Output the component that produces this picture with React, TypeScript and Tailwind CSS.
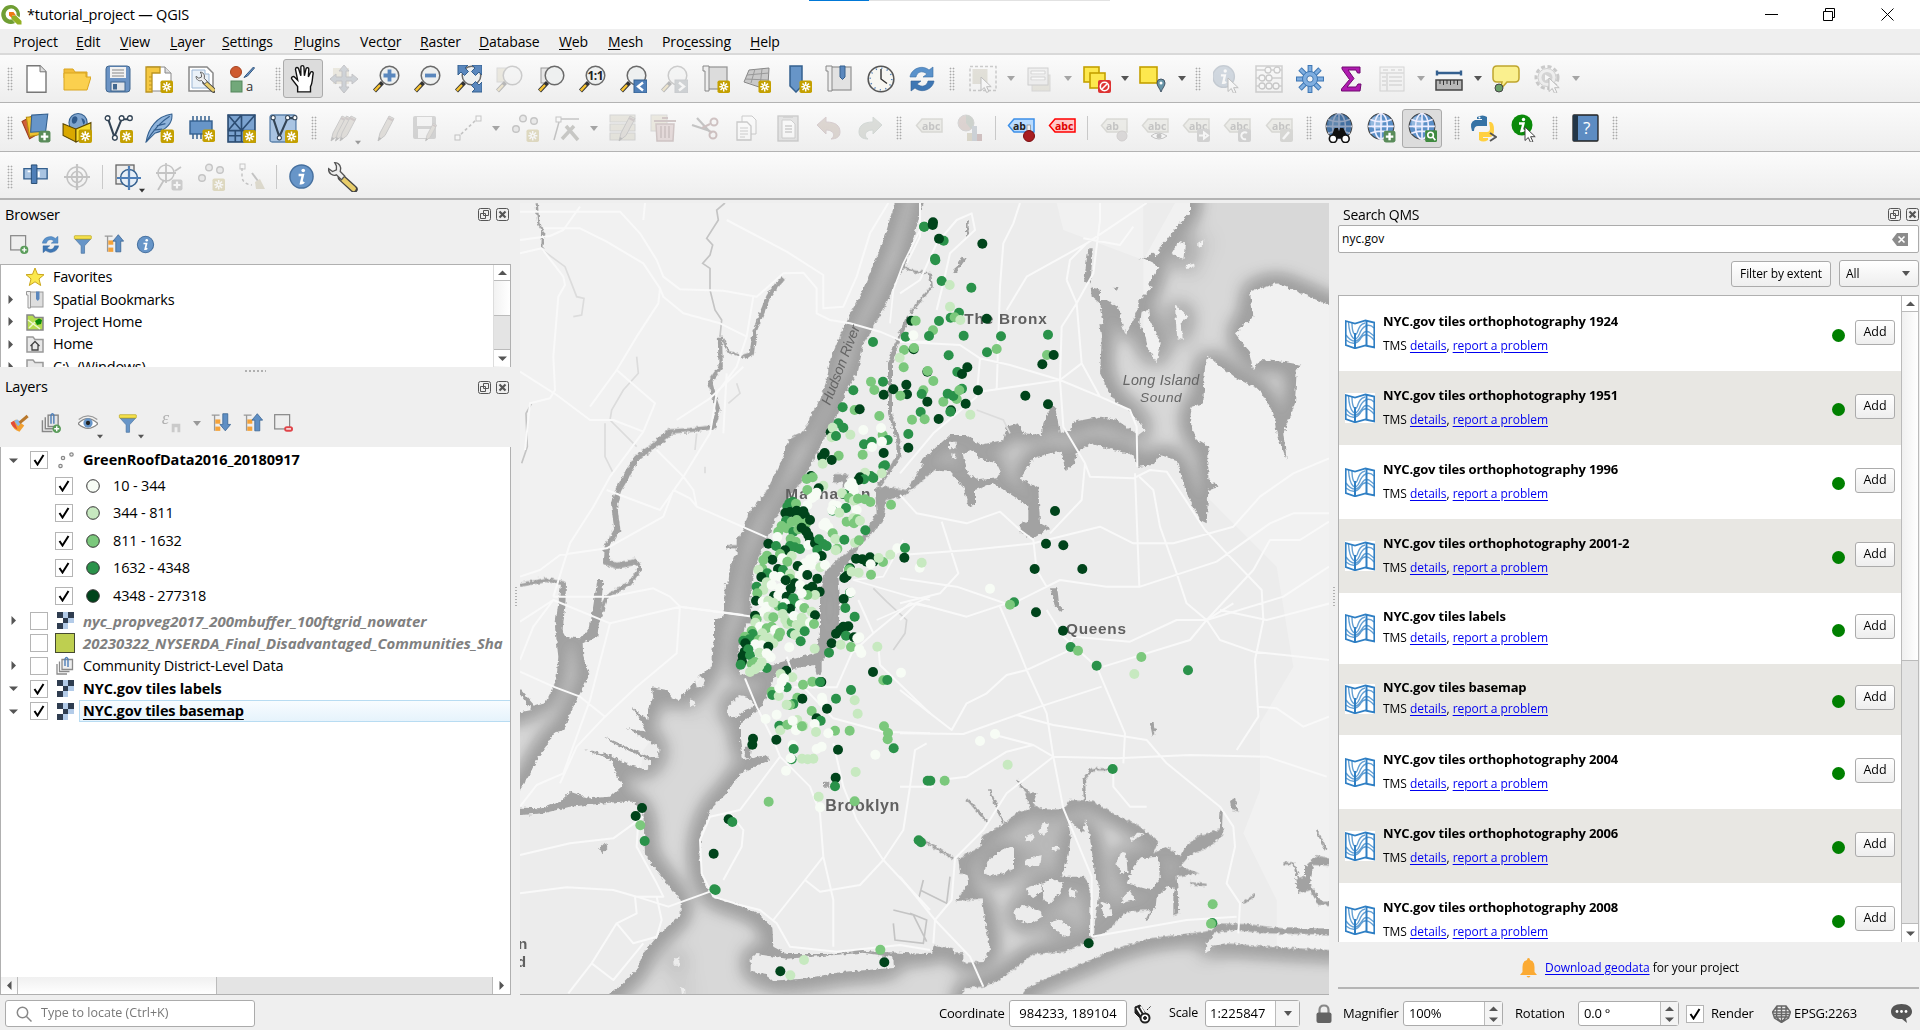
import React from 'react';

type Kids = { children?: React.ReactNode };

/* ---------- icon primitives ---------- */
function Ic({ children, s = 28, dim = false, vb = '0 0 28 28' }: Kids & { s?: number; dim?: boolean; vb?: string }) {
  return (
    <svg width={s} height={s} viewBox={vb} fill="none" className={dim ? 'shrink-0 opacity-30 saturate-50' : 'shrink-0'}>
      {children}
    </svg>
  );
}
const Star = () => (
  <g>
    <rect x="15.5" y="15.5" width="12.5" height="12.5" rx="1.8" fill="#c4a000" />
    <path d="M21.7 17v9.4M17.3 21.7h9M18.5 18.5l6.5 6.5M25 18.5l-6.5 6.5" stroke="#fff" strokeWidth="1.5" />
    <circle cx="21.7" cy="21.7" r="1" fill="#c4a000" />
  </g>
);
const Plus = ({ c = '#5a8c5a' }: { c?: string }) => (
  <g>
    <rect x="16.500" y="16.500" width="11" height="11" rx="2" fill={c} />
    <path d="M22 18.500v7M18.500 22h7" stroke="#fff" strokeWidth="2.200" />
  </g>
);
const Lens = ({ children }: Kids) => (
  <g>
    <path d="M10.500 17.500 2.500 26" stroke="#333" strokeWidth="4.200" />
    <path d="M8 20 2.800 25.600" stroke="#f7c331" strokeWidth="2.400" />
    <circle cx="17.500" cy="10.500" r="9.300" fill="#eef0f0" stroke="#6a6a6a" strokeWidth="1.500" />
    {children}
  </g>
);
const Tag = ({ t = 'abc', f = '#d6d6bd', s = '#9a9a80', c = '#555' }: { t?: string; f?: string; s?: string; c?: string }) => (
  <g>
    <path d="M1.500 11.500 7 5h20v13H7z" fill={f} stroke={s} strokeWidth="1.500" />
    <text x={t === 'abc' ? 7 : 6} y="15.500" fontSize="10.500" fontWeight="700" fontFamily="Open Sans, sans-serif" fill={c}>{t}</text>
  </g>
);
const Cursor = () => <path d="M15 13v13.500l3.300-3 2.300 5 2.300-1-2.300-4.800h4.600z" fill="#fff" stroke="#444" strokeWidth="1" />;
const Globe = () => (
  <g>
    <circle cx="14" cy="12.500" r="12" fill="#5b8fc7" stroke="#444" />
    <circle cx="10" cy="9" r="6" fill="#b9d3ec" opacity=".6" />
    <path d="M2 12.500h24M14 .5v24M4 6c6 2.500 14 2.500 20 0M4 19c6-2.500 14-2.500 20 0" stroke="#eef" strokeWidth="1.500" />
    <ellipse cx="14" cy="12.500" rx="6" ry="12" stroke="#eef" strokeWidth="1.500" />
  </g>
);
const Refresh = () => (
  <g>
    <path d="M2 12C3 4 14-1 21 5l4-3v10h-10l4-3C14 5 9 7 8 12z" fill="#5a92cb" stroke="#3a6ea5" strokeWidth=".6" />
    <path d="M26 16C25 24 14 29 7 23l-4 3V16h10l-4 3c5 4 10 2 11-3z" fill="#3e77b4" stroke="#2f5f96" strokeWidth=".6" />
  </g>
);
const Pencil = ({ x = 0 }: { x?: number }) => (
  <g transform={`translate(${x} 0)`}>
    <path d="M5 27 7 19 16 2l5 2.500-9 17z" fill="#b9a890" stroke="#666" />
    <path d="M5 27l1-4 2.500 1.500z" fill="#444" />
    <path d="M15 4l5 2.500" stroke="#8a6060" strokeWidth="2" />
  </g>
);
const Info = () => (
  <g>
    <circle cx="14" cy="14" r="12" fill="#6795c8" stroke="#46709f" strokeWidth="1.500" />
    <circle cx="15.800" cy="7.800" r="1.900" fill="#fff" />
    <path d="M11 12.500h4.500l-2 8.500q2 0 3-1.500" stroke="#fff" strokeWidth="2.500" />
  </g>
);
const Wrench = () => (
  <g>
    <path d="M13 15 24.500 25.500" stroke="#444" strokeWidth="6.500" strokeLinecap="round" />
    <path d="M13.500 15.500 24 25" stroke="#e8cd6a" strokeWidth="4.200" strokeLinecap="round" />
    <path d="M7 1.500c4 0 6.500 4 5 8l4 4-3 3.500-4.500-4.500C5 14 1 11 1.500 7L5 9.500 8.500 8V4.500z" fill="#eee" stroke="#555" strokeWidth="1.200" />
  </g>
);
const Tree = ({ up }: { up: boolean }) => (
  <g>
    <path d="M1 3h11M5 3v22" stroke="#999" strokeWidth="1.800" />
    <rect x="6" y="9" width="7" height="6" fill="#f5a33a" />
    <rect x="6" y="19" width="7" height="6" fill="#f5a33a" />
    {up ? <path d="M20 1l7.500 9h-4v15h-7V10h-4z" fill="#5f8fc4" stroke="#2f5a8c" /> : <path d="M20 25l7.500-9h-4V1h-7v15h-4z" fill="#5f8fc4" stroke="#2f5a8c" />}
  </g>
);
const Funnel = () => (
  <g>
    <path d="M3 6h23l-9 10v11h-5V16z" fill="#6795c8" stroke="#46709f" />
    <rect x="2" y="1" width="25" height="5" rx="1" fill="#f4e04d" stroke="#b8a41c" />
  </g>
);
const Qlogo = () => (
  <svg width="21" height="22" viewBox="0 0 21 22" className="shrink-0">
    <path d="M10 1a9.500 9.500 0 1 0 4 18l-3-3.500A5.500 5.500 0 1 1 15.500 11l3 2.500A9.500 9.500 0 0 0 10 1z" fill="#6f9e33" />
    <path d="M10.500 11.500H15L20.500 17v3.500H16.500L10.500 15z" fill="#93b023" />
    <path d="M8 8h4.500l2.500 3.500H11L11 14 8 11.500z" fill="#ee7913" />
  </svg>
);

const icons: Record<string, React.ReactNode> = {
  new: <Ic><path d="M5 .8h13l6 6v20.400H5z" fill="#fff" stroke="#777" strokeWidth="1.400" /><path d="M18 .8v6h6" fill="#ddd" stroke="#777" /></Ic>,
  open: <Ic><path d="M1 4h9l2 3h12v6H1z" fill="#f2bd3a" stroke="#d9a520" /><path d="M1 25V8h22v4h5l-4 13z" fill="#fbd04e" stroke="#d9a520" /></Ic>,
  save: <Ic><rect x="2" y="1" width="24" height="26" rx="3" fill="#6b93c4" stroke="#41678f" /><rect x="6" y="2" width="16" height="11" fill="#f2f2f2" /><path d="M8 5h12M8 8h12M8 11h12" stroke="#888" /><rect x="7" y="17" width="14" height="9" fill="#dfe3e8" stroke="#41678f" /><rect x="9" y="19" width="4" height="5.500" fill="#41678f" /></Ic>,
  layout: <Ic><path d="M2 2h18l6 6v18H2z" fill="#fff" stroke="#888" /><path d="M20 2v6h6" fill="#ddd" stroke="#888" /><path d="M1 2h14v6H7v19H1z" fill="#f5c842" stroke="#bb9420" strokeWidth="1.300" /><path d="M4 12h3M4 16h3M4 20h3M4 24h3" stroke="#bb9420" /><Star /></Ic>,
  layman: <Ic><path d="M2 2h18l6 6v18H2z" fill="#fff" stroke="#888" strokeWidth="1.500" /><path d="M5 5h13v4h4v14H5z" fill="#eaf1f8" stroke="#9bb6d4" /><g transform="translate(8 6) scale(.76)"><Wrench /></g></Ic>,
  style: <Ic><circle cx="8" cy="7" r="5.500" fill="#cf5a30" stroke="#a64320" /><path d="M25.500 2 18 10l-2 2.500 3.500-1.500 7-8z" fill="#6795c8" stroke="#33557d" /><rect x="3" y="16" width="11" height="11" fill="#72a87a" stroke="#55875c" /><text x="18" y="25.500" fontSize="13" fontFamily="Open Sans, sans-serif" fill="#333">a</text></Ic>,
  hand: <Ic s={30}><path d="M9 26V21L3.500 14c-1-2 1.500-3 3-1.500L9 15 7 5c0-2 2.300-2.300 2.900-.5L12 11V3c0-2 2.800-2 2.900 0l.4 8 1.500-6.500c.5-1.700 2.800-1.300 2.600.7L19 12l2-4c.7-1.500 2.800-.9 2.500.8C22.500 14 23 18 21 21v5z" fill="#fff" stroke="#111" strokeWidth="1.300" /></Ic>,
  pan: <Ic dim><rect x="3" y="3" width="16" height="16" fill="#d6c98e" /><path d="M14 0l5 6h-3v6h6V9l6 5-6 5v-3h-6v6h3l-5 6-5-6h3v-6H6v3l-6-5 6-5v3h6V6H9z" fill="#6d87a5" stroke="#556" /></Ic>,
  zin: <Ic><Lens><path d="M17.500 4.500v12M11.500 10.500h12" stroke="#5a87bd" strokeWidth="3.800" /></Lens></Ic>,
  zout: <Ic><Lens><path d="M12 10.500h11" stroke="#5a87bd" strokeWidth="3.800" /></Lens></Ic>,
  zfull: <Ic><Lens /><path d="M4 0h10l-3 3 3.500 3.500-4 4L7 7l-3 3zM28 0v10l-3-3-3.500 3.500-4-4L21 3l-3-3zM28 27H18l3-3-3.500-3.500 4-4L25 20l3-3z" fill="#5a87bd" stroke="#34608f" strokeWidth="1" /></Ic>,
  zsel: <Ic dim><rect x="2" y="3" width="14" height="14" fill="#d6c98e" stroke="#999" /><Lens /></Ic>,
  zlay: <Ic><rect x="4" y="3" width="14" height="15" fill="#e6e6e6" stroke="#999" /><Lens /></Ic>,
  znat: <Ic><Lens><text x="9.500" y="15" fontSize="12" fontWeight="700" fontFamily="Open Sans, sans-serif" fill="#222" textLength="16">1:1</text></Lens></Ic>,
  zlast: <Ic><Lens /><rect x="15" y="15" width="13" height="13" fill="#4f7fb8" stroke="#34608f" /><path d="M24 17.500 19 21.500l5 4" stroke="#fff" strokeWidth="2.400" /></Ic>,
  znext: <Ic dim><Lens /><rect x="15" y="15" width="13" height="13" fill="#789" stroke="#678" /><path d="M19 17.500l5 4-5 4" stroke="#fff" strokeWidth="2.400" /></Ic>,
  newmap: <Ic><rect x="5" y="2" width="20" height="22" fill="#dcdcdc" stroke="#999" strokeWidth="1.300" /><path d="M1 1h6v25H3V6H1z" fill="#eee" stroke="#888" /><Star /></Ic>,
  new3d: <Ic><path d="M6 5l20-2-1 17-9 2-15-5z" fill="#c9c9c9" stroke="#888" /><path d="M4 10l22-2M2 14l23 1M12 4l-4 14M19 4l-2 17" stroke="#999" /><Star /></Ic>,
  bm: <Ic><path d="M6 1h12v20l-6 6-6-6z" fill="#6795c8" stroke="#34608f" strokeWidth="1.500" /><Star /></Ic>,
  bms: <Ic><rect x="5" y="2" width="21" height="23" fill="#e2e2e2" stroke="#999" strokeWidth="1.300" /><path d="M1 1h6v25H3V6H1z" fill="#eee" stroke="#888" /><path d="M15 1h5v11l-2.500 2.500L15 12z" fill="#5a87bd" stroke="#34608f" /></Ic>,
  clock: <Ic><circle cx="14" cy="14" r="12.800" fill="#f7f7f2" stroke="#555" strokeWidth="1.600" /><circle cx="14" cy="14" r="10.800" stroke="#5a87bd" strokeWidth="1.600" strokeDasharray="1.200 4.450" /><path d="M14 4v10l6 4.500" stroke="#333" strokeWidth="1.400" /></Ic>,
  refresh: <Ic><Refresh /></Ic>,
  sel: <Ic dim><rect x="1" y="1.500" width="26" height="24" stroke="#666" strokeWidth="1.500" strokeDasharray="3 2" /><rect x="3.500" y="4" width="15" height="15" fill="#b9ad7e" /><g transform="translate(-3 -1)"><Cursor /></g></Ic>,
  form: <Ic dim><rect x="6" y="10" width="18" height="16" fill="#c9bf90" stroke="#999" /><rect x="2" y="3" width="20" height="17" fill="#ddd" stroke="#777" /><path d="M5 8h14M5 14h14" stroke="#fff" strokeWidth="4" /><path d="M5 6h14v3H5zM5 12h14v3H5z" stroke="#888" /></Ic>,
  desel: <Ic><rect x="1" y="2" width="15" height="15" fill="#fde84e" stroke="#c4a000" strokeWidth="1.600" /><rect x="7" y="8" width="15" height="15" fill="#fde84e" stroke="#c4a000" strokeWidth="1.600" /><rect x="15" y="15" width="13" height="13" rx="2" fill="#d33" /><circle cx="21.500" cy="21.500" r="4.200" stroke="#fff" strokeWidth="1.600" /><path d="M18.500 24.500l6-6" stroke="#fff" strokeWidth="1.600" /></Ic>,
  selloc: <Ic><rect x="1" y="2" width="17" height="16" fill="#fde84e" stroke="#c4a000" strokeWidth="1.600" /><path d="M22 27c-1.500-4-4-6-4-9a4 4 0 0 1 8 0c0 3-2.500 5-4 9z" fill="#6795a8" stroke="#456" /><circle cx="22" cy="18" r="1.500" fill="#fff" /></Ic>,
  ident: <Ic dim><g transform="translate(-2 -1) scale(.9)"><Info /></g><Cursor /></Ic>,
  abacus: <Ic dim><path d="M1 1h26v26H1zM1 5h26M1 13h26M1 21h26" stroke="#777" strokeWidth="1.500" /><g fill="#fff" stroke="#666" strokeWidth="1.300"><circle cx="13" cy="5" r="3" /><circle cx="22" cy="5" r="3" /><circle cx="7" cy="13" r="3" /><circle cx="14" cy="13" r="3" /><circle cx="7" cy="21" r="3" /><circle cx="14" cy="21" r="3" /><circle cx="21" cy="21" r="3" /></g></Ic>,
  gear: <Ic><g stroke="#3e77b4" strokeWidth="4.800"><path d="M14 0v28M0 14h28M4 4l20 20M24 4 4 24" /></g><g stroke="#7faee0" strokeWidth="2.800"><path d="M14 1v26M1 14h26M4.500 4.500l19 19M23.500 4.500l-19 19" /></g><circle cx="14" cy="14" r="7.500" fill="#7faee0" stroke="#3e77b4" /><circle cx="14" cy="14" r="3.200" fill="#f3f3f3" stroke="#3e77b4" /></Ic>,
  sigma: <Ic><path d="M5 2h18v6h-2.500L19 5h-8l6 8.500L10 22h9l2-3h3l-1 7H4.500v-2l8-9.500L5 4z" fill="#b01bb0" stroke="#700a70" /></Ic>,
  table: <Ic dim><rect x="2" y="2" width="24" height="24" fill="#eee" stroke="#888" /><path d="M2 8h24M9 8v18M4 12h4M11 12h13M4 16h4M11 16h13M4 20h4M11 20h13M5 5h5M13 5h4M20 5h4" stroke="#999" strokeWidth="1.500" /></Ic>,
  ruler: <Ic><path d="M2 8h24M2 5.500v5M26 5.500v5" stroke="#34608f" strokeWidth="2.400" /><rect x="1" y="15" width="26" height="10" fill="#b8b8b8" stroke="#444" strokeWidth="1.500" /><path d="M5 15v4M8.500 15v5M12 15v4M15.500 15v5M19 15v4M22.500 15v5" stroke="#333" /></Ic>,
  tip: <Ic><path d="M5 1h18q4 0 4 4v8q0 4-4 4h-8l-7 8 2-8H5q-4 0-4-4V5q0-4 4-4z" fill="#faf08e" stroke="#bfa52e" strokeWidth="1.500" /><circle cx="7" cy="23" r="4" fill="#6aa06a" stroke="#444" /></Ic>,
  action: <Ic dim><circle cx="13" cy="12.500" r="11" stroke="#666" strokeWidth="3" strokeDasharray="4 2.500" /><circle cx="13" cy="12.500" r="9" fill="#ddd" stroke="#777" /><circle cx="13" cy="12.500" r="5.500" fill="#888" /><path d="M11 9.500v6l5-3z" fill="#fff" /><Cursor /></Ic>,
  dsm: <Ic s={30}><path d="M1 8l9-5 7 16-9 5z" fill="#d2603a" stroke="#9c3f1e" /><path d="M5 4l11-1 2 17-10 2z" fill="#f2c230" stroke="#b58e10" /><path d="M10 2l15-1-2 16-14 1z" fill="#6795c8" stroke="#34608f" /><Plus /></Ic>,
  geopkg: <Ic s={30}><circle cx="15" cy="9" r="8.500" fill="#7fa5cf" stroke="#34608f" /><path d="M10 4c4-3 6 2 3 5s-5-1-3-5zM18 5c3 0 5 4 2 6z" fill="#2f5a8c" /><path d="M1 10l12 5v12L1 21z" fill="#d9a800" stroke="#5a4600" /><path d="M13 15l14-6v12l-14 6z" fill="#f7dc2e" stroke="#5a4600" /><Star /></Ic>,
  shp: <Ic s={29}><path d="M4 5l6 17 7-17h7" stroke="#345" strokeWidth="2" /><g fill="#fff" stroke="#345" strokeWidth="1.300"><circle cx="3.500" cy="4" r="2.300" /><circle cx="17" cy="4" r="2.300" /><circle cx="25" cy="4" r="2.300" /><circle cx="10.500" cy="23" r="2.300" /></g><Star /></Ic>,
  feather: <Ic s={30}><path d="M2 27C4 14 12 3 26 1c1 8-5 15-16 18z" fill="#8fb4dc" stroke="#34608f" /><path d="M2 27C8 17 14 9 24 3M9 16l8-1M12 12l8-2" stroke="#34608f" strokeWidth="1.200" /><Star /></Ic>,
  chip: <Ic><rect x="3" y="7" width="22" height="13" fill="#6795c8" stroke="#34608f" strokeWidth="1.400" /><path d="M6 2v5M10 2v5M14 2v5M18 2v5M22 2v5M6 20v5M10 20v5M14 20v5" stroke="#34608f" strokeWidth="1.500" /><Star /></Ic>,
  mesh: <Ic s={29}><rect x="1" y="1" width="26" height="26" fill="#7ba3d0" stroke="#2c4d73" strokeWidth="1.600" /><path d="M1 16h26M14 1v26M1 1l13 15M14 1 1 16M14 16 27 1M1 21h13M8 16v11" stroke="#2c4d73" strokeWidth="1.600" /><Star /></Ic>,
  virt: <Ic s={29}><rect x="1" y="1" width="25" height="26" rx="2" fill="#a9c4e2" stroke="#5b81ab" strokeWidth="1.300" /><path d="M4 4l6 18 8-18h7" stroke="#345" strokeWidth="2" /><g fill="#fff" stroke="#345"><circle cx="4" cy="3.500" r="2" /><circle cx="18" cy="3.500" r="2" /><circle cx="25" cy="3.500" r="2" /><circle cx="10" cy="23" r="2" /></g><Star /></Ic>,
  pencils: <Ic dim><g transform="translate(-3 0)"><Pencil x={-1} /><Pencil x={3.5} /><Pencil x={8} /></g></Ic>,
  pencil: <Ic dim><Pencil x={2} /></Ic>,
  savep: <Ic dim><rect x="1" y="2" width="23" height="23" rx="2" fill="#888" /><rect x="5" y="3" width="15" height="9" fill="#eee" /><rect x="6" y="15" width="12" height="9" fill="#eee" /><g transform="translate(10 8) scale(.7)"><Pencil /></g></Ic>,
  line: <Ic dim><path d="M3 24 24 4" stroke="#555" strokeWidth="1.600" strokeDasharray="3 2.500" /><rect x="1" y="21" width="5" height="5" fill="#fff" stroke="#555" /><rect x="22" y="2" width="5" height="5" fill="#fff" stroke="#555" /></Ic>,
  pts: <Ic dim><g fill="#ccc" stroke="#555" strokeWidth="1.400"><circle cx="5" cy="15" r="3.300" /><circle cx="12" cy="4.500" r="3.300" /><circle cx="23" cy="7" r="3.300" /></g><Star /></Ic>,
  vertex: <Ic dim><path d="M7 8 2 26M9 5h18" stroke="#555" strokeWidth="1.500" /><rect x="4" y="3" width="5" height="5" fill="#fff" stroke="#555" /><path d="M10 25 22 12M14 12l12 14" stroke="#665" strokeWidth="3.500" /></Ic>,
  tpen: <Ic dim><rect x="1" y="1" width="25" height="7" fill="#c9bf90" stroke="#888" /><rect x="1" y="10" width="25" height="7" fill="#c9bf90" stroke="#888" /><rect x="1" y="19" width="25" height="7" fill="#c9bf90" stroke="#888" /><Pencil x={5} /></Ic>,
  trash: <Ic dim><rect x="1" y="1" width="16" height="16" fill="#d6c98e" stroke="#999" /><path d="M6 10h18l-1 17H7z" fill="#d99" stroke="#955" strokeWidth="1.500" /><path d="M4 7h22M12 4h6M11 12v12M15 12v12M19 12v12" stroke="#955" strokeWidth="1.800" /></Ic>,
  cut: <Ic dim><path d="M1 11l18 6M6 4l13 14" stroke="#555" strokeWidth="2.200" /><circle cx="23" cy="8" r="3.500" stroke="#944" strokeWidth="2" /><circle cx="22" cy="21" r="3.500" stroke="#944" strokeWidth="2" /><path d="M19 10 11 14M19 17l2 2" stroke="#944" strokeWidth="2" /></Ic>,
  copy: <Ic dim><path d="M9 2h10l4 4v14H9z" fill="#fff" stroke="#666" /><path d="M4 8h10l4 4v14H4z" fill="#fff" stroke="#666" strokeWidth="1.300" /><path d="M7 14h8M7 17h8M7 20h8M7 23h5" stroke="#777" /></Ic>,
  paste: <Ic dim><rect x="4" y="2" width="20" height="25" fill="#bbb" stroke="#666" strokeWidth="1.300" /><path d="M8 6h9l4 4v14H8z" fill="#fff" stroke="#777" /><path d="M11 12h7M11 15h7M11 18h7M9 3h10" stroke="#777" strokeWidth="1.500" /></Ic>,
  undo: <Ic dim><path d="M2 11 11 3v5c10 0 14 4 14 10 0 5-4 7-9 7 4-2 4-9-5-9v4z" fill="#b58a6a" stroke="#a67" /></Ic>,
  redo: <Ic dim><path d="M26 11 17 3v5C7 8 3 12 3 18c0 5 4 7 9 7-4-2-4-9 5-9v4z" fill="#9aa890" stroke="#798" /></Ic>,
  abc: <Ic dim><Tag /></Ic>,
  pie: <Ic dim><circle cx="10" cy="9" r="8" fill="#b98070" stroke="#888" /><path d="M10 9V1a8 8 0 0 1 5 14z" fill="#686" /><rect x="11" y="19" width="5" height="8" fill="#a9994a" /><rect x="16" y="12" width="5" height="15" fill="#68a" /><rect x="21" y="20" width="5" height="7" fill="#a44" /></Ic>,
  abpin: <Ic><Tag t="ab" f="#b9dcff" s="#3c8fe8" c="#222" /><rect x="20" y="11" width="3.500" height="8" fill="#eee" stroke="#777" strokeWidth=".6" /><circle cx="22" cy="22" r="5.500" fill="#a81e22" stroke="#7a0f12" /></Ic>,
  abcred: <Ic><Tag f="#ffc9c9" s="#f00" c="#e00000" /></Ic>,
  abg: <Ic dim><Tag t="ab" /><circle cx="22" cy="22" r="5" fill="#a99" stroke="#877" /></Ic>,
  abeye: <Ic dim><Tag /><path d="M10 22q7-6 16 0-8 6-16 0z" fill="#fff" stroke="#555" /><circle cx="18" cy="22" r="2.500" fill="#555" /></Ic>,
  abmv: <Ic dim><Tag /><rect x="15" y="15" width="13" height="13" rx="2" fill="#888" /><path d="M17 21.500h5v-3l4 3-4 3v-3" stroke="#fff" strokeWidth="2" /></Ic>,
  abrot: <Ic dim><Tag /><rect x="15" y="15" width="13" height="13" rx="2" fill="#888" /><path d="M24 19a3.500 3.500 0 1 0-1 6" stroke="#fff" strokeWidth="2" /></Ic>,
  abed: <Ic dim><Tag /><rect x="15" y="15" width="13" height="13" rx="2" fill="#998" /><path d="M18 25l6-7" stroke="#fff" strokeWidth="2.500" /></Ic>,
  bino: <Ic s={30}><Globe /><circle cx="14" cy="12" r="11.500" fill="#234a70" opacity=".45" /><path d="M6 24 10 14h3l1 3 1-3h3l5 10z" fill="#111" /><circle cx="8.500" cy="24" r="3.500" fill="#fff" stroke="#111" strokeWidth="1.500" /><circle cx="20" cy="24" r="3.500" fill="#fff" stroke="#111" strokeWidth="1.500" /></Ic>,
  gplus: <Ic s={30}><Globe /><Plus /></Ic>,
  gq: <Ic s={30}><Globe /><rect x="17" y="16" width="11" height="11" rx="1" fill="#3f8a3f" /><circle cx="22" cy="20.500" r="2.600" stroke="#fff" strokeWidth="1.500" /><path d="M24 22.500l2.500 3" stroke="#fff" strokeWidth="1.500" /></Ic>,
  py: <Ic><path d="M8 3q6-3 10 0v9H9q-4 0-4 5H3q-3-9 3-11h7V5H8z" fill="#3673a5" /><path d="M20 8h2q3 1 3 8t-4 7h-7v1h5v2q-5 3-9 0v-8h8q3 0 3-4z" fill="#ffd040" /><circle cx="10.500" cy="3.500" r="1" fill="#fff" /><path d="M21 19l6 4-6 4" stroke="#555" strokeWidth="1.800" /></Ic>,
  ginfo: <Ic><circle cx="12" cy="11" r="10.500" fill="#0a8a0a" /><circle cx="13.500" cy="5.500" r="1.700" fill="#fff" /><path d="M9 9.500h4.500l-2 7.500q2 0 3-1" stroke="#fff" strokeWidth="2.400" /><Cursor /></Ic>,
  book: <Ic><rect x="2" y="1" width="25" height="26" rx="1" fill="#5d8cc2" stroke="#222" strokeWidth="1.300" /><rect x="2" y="1" width="5" height="26" fill="#223547" /><text x="12" y="20" fontSize="17" fontFamily="Open Sans, sans-serif" fill="#fff">?</text></Ic>,
  clip: <Ic s={26}><path d="M1 5h25v11H1z" fill="#a9c4e2" stroke="#34608f" strokeWidth="1.500" /><path d="M9 1h6v20H9z" fill="#4f7fb8" stroke="#234a70" /><path d="M5 8h3M17 8v6" stroke="#fff" strokeWidth="2" /></Ic>,
  target: <Ic dim><circle cx="14" cy="14" r="10" stroke="#555" strokeWidth="1.500" /><circle cx="14" cy="14" r="5.500" stroke="#555" strokeWidth="1.500" /><path d="M14 1v26M1 14h26" stroke="#555" strokeWidth="2.200" /></Ic>,
  advdig: <Ic><rect x="2" y="2" width="18" height="19" fill="#eee" stroke="#666" strokeWidth="1.300" /><circle cx="15" cy="15" r="8.500" fill="#e6eef7" stroke="#34608f" strokeWidth="1.500" /><path d="M15 3v24M3 15h24" stroke="#4f7fb8" strokeWidth="2.200" /></Ic>,
  tplus: <Ic dim><circle cx="11" cy="10" r="8" stroke="#555" strokeWidth="1.500" /><path d="M11 0v20M1 10h20M3 27l6-10M20 8l6-4" stroke="#555" strokeWidth="1.800" /><Plus c="#777" /></Ic>,
  broom: <Ic dim><path d="M4 5v8q0 8 10 9" stroke="#555" strokeWidth="1.500" strokeDasharray="3 2.500" /><rect x="2" y="1" width="5" height="5" stroke="#555" /><path d="M14 10l6 8" stroke="#555" strokeWidth="2" /><path d="M17 19l5-3 5 10-9 0z" fill="#b9a050" /></Ic>,
  info: <Ic s={27}><Info /></Ic>,
  wrench: <Ic s={31}><Wrench /></Ic>,
};

const Arrow = ({ c = 'border-t-[#555]' }: { c?: string }) => (
  <span className={`block h-0 w-0 border-x-[4.500px] border-t-[5px] border-x-transparent ${c}`} />
);

/* Toolbar tokens: name = icon slot, |x = grip of a given kind, / and . = separators, v/V = dim/dark drop arrow */
function Tool({ k }: { k: string }) {
  if (k.startsWith('|'))
    return (
      <div className={k === '|0' ? 'flex w-[15px] justify-center pl-1' : k === '|s' ? 'flex w-[20px] justify-end pr-[2px]' : k === '|e' ? 'flex w-[17px] justify-center' : 'flex w-[19.500px] justify-center'}>
        <span className="h-[24px] w-[6px] bg-[radial-gradient(circle,#aaa_0.8px,transparent_1.1px)] bg-[length:3px_3px]" />
      </div>
    );
  if (k === '/') return <div className="flex w-[10px] justify-center"><span className="h-[24px] w-px bg-[#c9c9c9]" /></div>;
  if (k === '.') return <div className="flex w-[8px] justify-center"><span className="h-[24px] w-px bg-[#c9c9c9]" /></div>;
  if (k === 'v' || k === 'V') return <div className="flex w-[15.700px] justify-center"><Arrow c={k === 'v' ? 'border-t-[#a5a5a5]' : 'border-t-[#555]'} /></div>;
  const on = k === 'hand' || k === 'gq';
  const sub = k === 'pencils' || k === 'advdig';
  return (
    <div className="relative flex w-[41.250px] shrink-0 items-center justify-center">
      <div className={on ? 'flex h-[39px] w-[40px] items-center justify-center rounded-[3px] border border-[#ababab] bg-[#dcdcdc]' : 'flex h-[39px] items-center justify-center'}>{icons[k]}</div>
      {sub && <span className="absolute bottom-[3px] right-[3px] scale-75"><Arrow c={k === 'pencils' ? 'border-t-[#999]' : 'border-t-[#333]'} /></span>}
    </div>
  );
}
const row1 = '|0 new open save layout layman style |s hand pan zin zout zfull zsel zlay znat zlast znext newmap new3d bm bms clock refresh |m sel v form v desel V selloc V |e ident abacus gear sigma table v ruler V tip action v'.split(' ');
const row2 = '|0 dsm geopkg shp feather chip mesh virt |m pencils pencil savep line v pts vertex v tpen trash cut copy paste undo redo |e abc pie / abpin abcred / abg abeye abmv abrot abed |m bino gplus gq |s py ginfo |m book |m'.split(' ');
const row3 = '|0 clip target / advdig tplus pts broom . info wrench'.split(' ');

function Bar({ items, h }: { items: string[]; h: string }) {
  return (
    <div className={`flex shrink-0 items-center border-[#b3b3b3] bg-linear-to-b from-[#fbfbfb] to-[#eeeeee] ${h}`}>
      {items.map((k, i) => <Tool key={i} k={k} />)}
    </div>
  );
}

const menus: [string, number, string][] = [
  ['Project', 3, 'w-[63px]'], ['Edit', 0, 'w-[44px]'], ['View', 0, 'w-[50px]'], ['Layer', 0, 'w-[52px]'], ['Settings', 0, 'w-[72px]'],
  ['Plugins', 0, 'w-[66px]'], ['Vector', 4, 'w-[60px]'], ['Raster', 0, 'w-[59px]'], ['Database', 0, 'w-[80px]'], ['Web', 0, 'w-[49px]'],
  ['Mesh', 0, 'w-[54px]'], ['Processing', 3, 'w-[88px]'], ['Help', 0, 'w-[40px]'],
];

/* ---------- dock widgets ---------- */
const DockButtons = () => (
  <div className="flex gap-[5px]">
    <svg width="13" height="13" viewBox="0 0 13 13" fill="none" stroke="#555"><rect x=".5" y=".5" width="12" height="12" rx="2" /><path d="M5.500 2.500h5v5h-5zM2.500 5.500h5v5h-5z" /></svg>
    <svg width="13" height="13" viewBox="0 0 13 13" fill="none" stroke="#555"><rect x=".5" y=".5" width="12" height="12" rx="2" /><path d="M3.500 3.500l6 6M9.500 3.500l-6 6" strokeWidth="2.200" /></svg>
  </div>
);
const Tri = ({ d, on = true }: { d: 'r' | 'd' | 'u' | 'l'; on?: boolean }) => (
  <svg width="9" height="9" viewBox="0 0 9 9" className={on ? 'shrink-0' : 'invisible shrink-0'}>
    <path d={d === 'r' ? 'M2.500 0v9L7 4.500z' : d === 'd' ? 'M0 2.500h9L4.500 7z' : d === 'u' ? 'M0 7h9L4.500 2.500z' : 'M6.500 0v9L2 4.500z'} fill="#555" />
  </svg>
);
const Check = ({ on = true }: { on?: boolean }) => (
  <span className="flex h-[18px] w-[18px] shrink-0 items-center justify-center border border-[#b5b5b5] bg-white">
    {on && <svg width="12" height="12" viewBox="0 0 12 12" fill="none"><path d="M1.500 6 4.500 10.500 10.500 1" stroke="#000" strokeWidth="2" /></svg>}
  </span>
);
const RasterIcon = () => (
  <svg width="17" height="17" viewBox="0 0 3 3" shapeRendering="crispEdges" className="shrink-0"><path d="M0 0h3v3H0z" fill="#b3cbe8" /><path d="M0 0h1v1H0zM2 0h1v1H2zM1 1h1v1H1zM0 2h1v1H0z" fill="#2f3d50" /><path d="M0 1h1v1H0zM2 2h1v1H2z" fill="#fff" /></svg>
);
const GroupIcon = () => (
  <svg width="18" height="19" viewBox="0 0 18 19" fill="none" className="shrink-0" stroke="#8a8a8a"><path d="M1 8v10h10M3.500 5.500v10h10" strokeWidth="1.300" /><path d="M6 3.500h10.500v10H6z" fill="#eee" strokeWidth="1.300" /><path d="M9 10V3q1.500-3 3 0v8" stroke="#4f7fb8" strokeWidth="1.400" /></svg>
);
const FolderIcon = ({ kind }: { kind: string }) => (
  <svg width="18" height="18" viewBox="0 0 18 18" fill="none" className="shrink-0">
    {kind === 'star' ? <path d="M9 0l2.500 6.300 6.500.4-5 4.200 1.700 6.600L9 13.800l-5.700 3.700L5 10.900 0 6.700l6.500-.4z" fill="#fbe84e" stroke="#c9a51c" /> : null}
    {kind === 'bm' ? <g><rect x="3" y="1" width="14" height="15" fill="#dedede" stroke="#999" /><path d="M.5 .5h4V17H2V4H.5z" fill="#eee" stroke="#999" /><path d="M10 .5h3.500V8l-1.700 2L10 8z" fill="#5a87bd" /></g> : null}
    {kind === 'ph' ? <g><path d="M1 2h6l2 2.500h8V17H1z" fill="#b5dc50" stroke="#888" strokeWidth="1.500" /><path d="M2 7l12 9M3 15 9 9" stroke="#eef8d0" strokeWidth="1.500" /><path d="M9 8l4-2.500 3 1.500-1 4-4 1z" fill="#0a8a0a" /></g> : null}
    {kind === 'home' || kind === 'dir' ? <path d="M1 2h6l2 2.500h8V17H1z" fill="#e8e8e8" stroke="#999" strokeWidth="1.500" /> : null}
    {kind === 'home' ? <path d="M4.500 11 9 6.500l4.500 4.500M6 10v5h6v-5" stroke="#444" strokeWidth="1.300" /> : null}
  </svg>
);

const browserRows: [string, string][] = [['star', 'Favorites'], ['bm', 'Spatial Bookmarks'], ['ph', 'Project Home'], ['home', 'Home'], ['dir', 'C:\\  (Windows)']];
const classes: [string, string][] = [['#f7fcf5', '10 - 344'], ['#c7e9c0', '344 - 811'], ['#7bc87c', '811 - 1632'], ['#2a924a', '1632 - 4348'], ['#00441b', '4348 - 277318']];

function LeftDock() {
  return (
    <div className="flex w-[511px] shrink-0 flex-col">
      <div className="flex h-[29px] items-center justify-between pl-[5px] pr-[2px] text-[14.500px] tracking-[-0.2px]"><span>Browser</span><DockButtons /></div>
      <div className="flex h-[35px] items-center gap-[12.300px] pl-[10px] pb-[5px]">
        <Ic s={19}><rect x="1" y="1" width="22" height="21" fill="#eee" stroke="#888" strokeWidth="1.800" /><circle cx="21" cy="22" r="6" fill="#5a9c5a" /><path d="M21 18.500v7M17.500 22h7" stroke="#fff" strokeWidth="2" /></Ic>
        <Ic s={19}><Refresh /></Ic>
        <Ic s={19}><Funnel /></Ic>
        <Ic s={20}><Tree up /></Ic>
        <Ic s={19}><Info /></Ic>
      </div>
      <div className="flex h-[103px] overflow-hidden border-x border-t border-[#b0b0b0] bg-white">
        <div className="flex-1 pt-px">
          {browserRows.map(([k, t]) => (
            <div key={t} className="flex h-[22.400px] items-center pl-[5px] text-[14.500px] tracking-[-0.25px]">
              <Tri d="r" on={k !== 'star'} /><span className="w-[11px]" /><FolderIcon kind={k} /><span className="ml-[9px] whitespace-pre">{t}</span>
            </div>
          ))}
        </div>
        <div className="flex w-[17px] flex-col border-l border-[#ddd] bg-linear-to-r from-[#f2f2f2] to-white">
          <div className="flex h-[16px] items-center justify-center border-b border-[#bbb] bg-white"><Tri d="u" /></div>
          <div className="h-[34px]" />
          <div className="h-[35px] border-y border-[#bbb] bg-[#e4e4e4]" />
          <div className="flex h-[16px] items-center justify-center bg-white"><Tri d="d" /></div>
        </div>
      </div>
      <div className="flex h-[8px] items-center justify-center"><span className="h-[2px] w-[21px] bg-[repeating-linear-gradient(90deg,#b0b0b0_0_2px,transparent_2px_4px)]" /></div>
      <div className="flex h-[24px] items-center justify-between pl-[5px] pr-[2px] text-[14.500px] tracking-[-0.2px]"><span>Layers</span><DockButtons /></div>
      <div className="flex h-[48px] items-center pl-[10px]">
        <Ic s={19}><path d="M1 13l8-5 12 9-7 9q-9-2-13-13z" fill="#f2a030" /><path d="M1 13l5-3 5 13q-7-3-10-10z" fill="#e24a3a" /><path d="M6 10l5-2 6 5-5 5z" fill="#8ab8e8" /><path d="M14 13 26 3" stroke="#b9782c" strokeWidth="4.500" /></Ic>
        <span className="w-[12px]" /><Ic s={20}><path d="M2 10v16h14M6 6v16h14" stroke="#888" strokeWidth="2" /><rect x="10" y="3" width="14" height="16" fill="#e5e5e5" stroke="#888" strokeWidth="2" /><path d="M14 15V3q2-4 4 0v12" stroke="#4f7fb8" strokeWidth="2" /><circle cx="22" cy="22" r="6" fill="#5a9c5a" /><path d="M22 18.500v7M18.500 22h7" stroke="#fff" strokeWidth="2" /></Ic>
        <span className="w-[17px]" /><Ic s={20}><path d="M0 15Q13 1 28 15 14 28 0 15z" fill="#fff" stroke="#888" strokeWidth="1.800" /><circle cx="14" cy="14" r="6.500" fill="#6795c8" /><circle cx="14" cy="14" r="3" fill="#222" /><path d="M1 9Q14-1 27 9" stroke="#999" strokeWidth="1.800" /></Ic>
        <span className="mt-[26px] ml-[-2px] scale-75"><Arrow /></span>
        <span className="w-[14px]" /><Ic s={19}><Funnel /></Ic><span className="mt-[26px] scale-75"><Arrow /></span>
        <span className="w-[16px]" /><Ic s={20} dim><text x="1" y="16" fontSize="26" fontStyle="italic" fontFamily="Liberation Serif, serif" fill="#222">ε</text><path d="M15 15h12v12h-4v-7h-4v7h-4z" fill="#777" /></Ic>
        <span className="w-[12px]" /><Arrow c="border-t-[#999]" />
        <span className="w-[10px]" /><Ic s={20}><Tree up={false} /></Ic>
        <span className="w-[12px]" /><Ic s={20}><Tree up /></Ic>
        <span className="w-[11px]" /><Ic s={19}><rect x="1" y="1" width="22" height="21" fill="#eee" stroke="#888" strokeWidth="1.800" /><rect x="15" y="18" width="13" height="8" rx="4" fill="#e0454a" /><path d="M18 22h7" stroke="#fff" strokeWidth="2" /></Ic>
      </div>
      <div className="flex flex-1 flex-col overflow-hidden border-x border-b border-[#b0b0b0] bg-white text-[14.500px] tracking-[-0.15px]">
        <div className="flex-1 pt-px">
          <div className="flex h-[24px] items-center pl-[8px]"><Tri d="d" /><span className="w-[12px]" /><Check />
            <svg width="17" height="17" viewBox="0 0 17 17" className="ml-[9px] shrink-0" fill="#eee" stroke="#888" strokeWidth="1.200"><circle cx="3.500" cy="14" r="1.700" /><circle cx="6" cy="6" r="1.700" /><circle cx="14.500" cy="2.500" r="1.700" /></svg>
            <span className="ml-[9px] font-bold tracking-normal">GreenRoofData2016_20180917</span></div>
          {classes.map(([c, t]) => (
            <div key={t} className="flex h-[27.500px] items-center pl-[54px]"><Check /><svg width="14" height="14" viewBox="0 0 14 14" className="ml-[13px]"><circle cx="7" cy="7" r="6.300" fill={c} stroke="#333" /></svg><span className="ml-[13px]">{t}</span></div>
          ))}
          <div className="flex h-[22.600px] items-center pl-[8px] text-[15px] font-bold italic tracking-normal text-[#808080]"><Tri d="r" /><span className="w-[12px]" /><Check on={false} /><span className="w-[9px]" /><RasterIcon /><span className="ml-[9px]">nyc_propveg2017_200mbuffer_100ftgrid_nowater</span></div>
          <div className="flex h-[22.600px] items-center whitespace-nowrap pl-[8px] text-[15px] font-bold italic tracking-[-0.02px] text-[#808080]"><Tri d="r" on={false} /><span className="w-[12px]" /><Check on={false} /><span className="ml-[7px] h-[20px] w-[20px] shrink-0 border border-[#454a30] bg-[#becf50]" /><span className="ml-[8px]">20230322_NYSERDA_Final_Disadvantaged_Communities_Sha</span></div>
          <div className="flex h-[22.600px] items-center pl-[8px] tracking-[-0.17px]"><Tri d="r" /><span className="w-[12px]" /><Check on={false} /><span className="w-[8px]" /><GroupIcon /><span className="ml-[9px]">Community District-Level Data</span></div>
          <div className="flex h-[22.600px] items-center pl-[8px] font-bold tracking-[-0.1px]"><Tri d="d" /><span className="w-[12px]" /><Check /><span className="w-[9px]" /><RasterIcon /><span className="ml-[9px]">NYC.gov tiles labels</span></div>
          <div className="flex h-[22.600px] items-center pl-[8px] font-bold tracking-[-0.15px]"><Tri d="d" /><span className="w-[12px]" /><Check /><span className="w-[9px]" /><RasterIcon /><span className="ml-[5px] flex h-[22px] flex-1 items-center border border-r-0 border-[#b8dcf2] bg-linear-to-b from-[#f8fcff] to-[#e6f3fc] pl-[3px] underline underline-offset-[3px]">NYC.gov tiles basemap</span></div>
        </div>
        <div className="flex h-[17px] bg-linear-to-b from-[#f0f0f0] to-white">
          <div className="flex w-[17px] items-center justify-center border-r border-[#bbb]"><Tri d="l" /></div>
          <div className="w-[198px]" />
          <div className="flex-1 border-x border-[#bbb] bg-[#e4e4e4]" />
          <div className="flex w-[17px] items-center justify-center bg-white"><Tri d="r" /></div>
        </div>
      </div>
    </div>
  );
}

/* ---------- map ---------- */
const palette: Record<string, string> = { a: '#f7fcf5', b: '#c7e9c0', c: '#7bc87c', d: '#2a924a', e: '#00441b' };
const dotsNW = '1243,80d 1204,362e 1217,362c 1187,410d 1210,406a 1182,450c 1211,448e 1212,444c 1169,473b 1181,502c 1089,426d 1083,545c 1119,545d 1093,570c 1121,584e 1150,568e 1189,554e 1191,583e 1171,587c 1030,571d 998,622d 1034,630c 1049,628e 1108,648c 985,670d 1000,683d 962,697e 968,683b 965,712b 978,708d 1021,704b 1060,690a 1118,705c 1113,684a 1195,702d 1195,743e 1062,733d 1085,725d 1133,720d 1116,725a 1086,741a 1121,759e 1058,764c 944,759e 986,767c 936,770e 965,780e 938,791b 1125,796d 1120,799d';
const dotsNE = '72,80d 99,67e 98,75e 131,122d 117,116e 247,131e 105,176d 106,181d 125,243d 149,255b 214,263d 150,320b 177,338d 152,353d 164,352c 181,360b 117,363d 260,356e 99,391c 87,408d 191,407d 303,409d 444,404d 290,447c 261,457d 146,466d 441,465c 461,465e 427,493e 172,516d 202,502e 186,522e 82,515e 83,513c 100,543c 70,571c 65,582d 82,605e 130,605c 143,581d 170,597c 160,588d 186,566d 178,571c 234,571e 376,587e 197,611e 153,631e 151,635d 211,644b 62,636d 74,658c 36,659c 116,657e 444,613e 465,933e 438,1031e 490,1036e 404,1107e 547,1107e 270,1166a 342,1207d 330,1214c 408,1237e';
const dotsC = '333,18e 320,27c 338,22c 370,47b 356,55e 322,60c 350,68a 336,84a 345,77a 322,106a 268,100d 278,95d 262,110d 288,101c 256,129e 270,126e 285,128e 300,131e 315,137e 290,122e 310,124e 258,152d 275,156c 290,150c 300,160c 320,158c 330,150e 245,168c 260,175c 235,185c 280,185d 295,178c 305,173e 318,184e 325,196e 330,210e 232,201a 205,221e 228,228d 272,207c 287,215c 270,228d 284,232d 300,237d 255,241e 325,225a 345,220e 357,208d 370,222d 352,240d 380,228d 365,258e 240,252c 201,257c 217,269e 190,270c 247,265a 275,258b 262,275c 330,268a 345,262a 315,280a 335,285a 293,288e 310,299a 361,292b 375,285a 187,296c 175,300b 202,310d 184,321e 234,297e 249,300d 222,318a 240,320a 270,312b 300,317a 322,315e 352,326e 270,326c 257,331e 285,340e 272,356e 300,345a 170,350d 200,337b 190,360b 215,345a 240,355a 222,378e 235,376a 246,368a 260,380e 323,358e 337,350e 359,365e 345,375b 322,375c 305,370a 172,370c 168,392e 188,395a 205,392b 200,410a 280,385d 275,395d 288,400d 235,408c 220,398b 255,400a 270,416e 248,412d 300,405a 313,414c 335,425b 345,436e 190,425a 165,437e 170,448c 166,458b 205,440b 220,442c 180,470a 200,475c 215,470c 225,480a 240,488c 235,500c 187,490b 248,432b 256,450b 262,462b 275,455c 282,438a 305,443b 315,455b 290,465b 330,458a 342,462c 300,480b 275,490d 285,495b 314,484d 302,514d 155,483c 158,492d 135,500c 130,512d 148,508d 176,510c 190,510b 205,505b 220,520b 166,523a 185,526a 136,520e 205,530e 134,545e 145,538d 128,558e 150,556d 178,548b 200,550a 212,562a 268,532a 344,536b 126,575e 122,584d 155,582c 165,576c 200,594d 150,606b 165,598b 178,588b 185,577b 512,18d 545,10b 495,8b 480,22e 492,28d 520,24d 475,30e 455,38a 460,50a 447,48a 462,66a 432,72d 426,70b 447,84c 462,92b 474,86c 495,88c 511,96c 573,104c 400,105a 412,108a 398,122d 396,120a 438,114d 418,128b 470,120a 376,158a 370,165a 385,172a 440,155c 460,145b 472,148c 462,160c 480,152b 496,181d 398,190c 406,207b 433,209d 465,218b 477,211c 412,236c 407,241b 468,266e 487,268e 510,262e 520,275e 500,275e 512,283a 549,276c 536,264b 571,254b 592,235a 615,234d 613,263e 659,293a 665,278b 476,308b 513,314c 450,295e 448,297d 447,300c 440,318e 433,324e 455,305b 450,368d 452,367a 431,387e 436,414d 464,440d 445,469e 430,470e 420,480e 408,491e 438,497d 395,520e 422,524b 387,548d 462,502e 472,505a 478,502a 453,531c 478,538a 484,549a 532,530b 519,606e 550,631c 562,630d 603,608a';
const dotsSW = '829,212e 812,222b 847,232b 822,235a 785,275c 787,285d 806,288b 830,262d 815,245a 808,265a 879,254c 907,245c 934,246e 930,246d 862,293c 850,312d 840,315c 830,314b 877,296e 936,293a 938,305a 978,296d 1023,270d 1034,301b 905,333c 951,326e 1043,341b 800,344a 767,357a 808,377d 811,391b 832,374c 862,360b 848,362a 858,391a 880,378b 876,379c 920,355e 932,362d 914,372a 918,396b 975,392c 1019,392c 955,400a 729,416e 727,434e 799,419e 848,435a 851,447d 920,447a 935,440a 984,449e 845,478d 842,475a 876,476b 893,478b 910,476b 828,512a 1096,464a 1037,516b 1122,379c 1134,399c 1133,418c 1151,445d 977,533e 975,559d 926,590b 930,622a 1034,604c 776,605c 1253,542d 396,624e 377,648e 391,676c 404,723d 656,658e 667,666d 611,761e 613,868d 617,870d 1111,1049c 1123,1087e 811,1114e 882,1080b 841,1126b 1226,721d 1233,727d';
const dotsSE = '489,92e 512,141d 534,152c 590,197d 724,171c 703,222b 864,211d 285,402a 240,423a 323,494b 91,542d 134,542c 638,507d 566,1030e 938,913c 937,969d 933,971c';

const Dots = ({ d, x, y }: { d: string; x: number; y: number }) => (
  <g transform={`translate(${x} ${y})`}>
    {d.split(' ').map((p, i) => {
      const [cx, rest] = p.split(',');
      return <circle key={i} cx={cx} cy={parseInt(rest, 10)} r="15" fill={palette[rest.slice(-1)]} />;
    })}
  </g>
);

function MapView() {
  return (
    <svg viewBox="30 9 2427 2373" preserveAspectRatio="none" className="block h-full w-full bg-[#ececec]">
      <defs>
        <filter id="water" filterUnits="userSpaceOnUse" x="-150" y="-150" width="2850" height="2800" colorInterpolationFilters="sRGB">
          <feTurbulence type="fractalNoise" baseFrequency="0.09" numOctaves="2" seed="3" result="n" />
          <feDisplacementMap in="SourceGraphic" in2="n" scale="14" xChannelSelector="R" yChannelSelector="G" result="src" />
          <feGaussianBlur in="src" stdDeviation="34" result="b" />
          <feComponentTransfer in="b" result="m"><feFuncA type="table" tableValues="0 0 0 0 0 0 0.02 0.1 0.25 0.5 1" /></feComponentTransfer>
          <feFlood floodColor="#d8d8d8" result="light" />
          <feComposite in="light" in2="m" operator="in" result="l2" />
          <feFlood floodColor="#a2a2a2" result="dark" />
          <feComposite in="l2" in2="dark" operator="over" result="w" />
          <feComposite in="w" in2="src" operator="in" />
        </filter>
        <mask id="islands" maskUnits="userSpaceOnUse" x="-150" y="-150" width="2850" height="2800">
          <rect x="-150" y="-150" width="2850" height="2800" fill="#fff" />
          <g fill="#000">
            <g transform="translate(0 1200)">
              <path d="M650,340 655,318 690,285 715,292 735,318 705,330 680,350 660,352zM555,240 570,228 585,240 578,262 560,262zM538,298l15,4 4,14-16,4zM492,1072h16v25h-14zM512,1160l10,4 2,20h-8z" />
              <path d="M722,1075 740,1062 830,1076 1060,1058 1150,1072 1152,1104 1000,1115 880,1136 780,1142 772,1122 722,1116z" />
            </g>
            <g transform="translate(1170 0)">
              <path d="M700,185 730,175 760,190 775,205 745,250 755,265 715,300 715,320 695,370 678,405 665,370 660,335 640,300 660,250zM722,335 745,330 748,360 782,430 770,487 745,450 735,405 718,370zM825,318 835,320 865,350 845,365 848,420 832,415 828,370zM815,160 835,125 855,130 850,180zM895,130l18-12-2,18-16,4zM857,195l25-4 2,12h-26zM750,9 860,9 865,45 830,75 800,100 770,170 750,150 765,110z" />
              <path d="M188,762 215,750 250,780 290,790 302,815 290,835 240,840 205,825zM147,725h20v20h-20zM155,760l14,2-4,14-12-2z" />
            </g>
            <g transform="translate(1170 1200)">
              <path d="M252,820 262,785 290,760 330,738 342,745 342,805 310,820 270,828zM375,710l25-10 5,20-28,4zM418,690l15-25 14,8-10,30-18,2zM375,780l50-15-4,30-44,4zM455,740l18-6 4,14-18,6zM378,865l50-18-4,30-28,20zM428,850l30-15 30,15-8,30-30,30-20-10zM342,930l30-15 50,18 4,18-40,20-38-15zM448,970l25-12 40,25-4,25-20,2zM505,865l25,5-4,25-18-5z" />
              <path d="M503,655 550,700 555,657 568,700 585,820 600,870 585,960 582,1010 570,1005 572,870 555,830 485,830 505,770 512,710zM648,790l15-35 15,5 5,55-20,4zM605,905l25,10 5,35-20,4-8-20zM668,890l20-20 18,30-40,8zM680,850 700,800 720,775 775,770 780,840 750,870zM765,940 770,890 805,860 825,870 812,925 790,950zM690,715l30-20 14,8-40,20z" />
            </g>
          </g>
        </mask>
      </defs>

      {/* land outside the city */}
      <path d="M0,0H1200L960,700 720,1000 650,1200 600,1400 400,1650 380,1800 0,1830zM1640,9 1660,90 1900,180 2000,0H2500V2400H2300V2100L2200,1900 2250,1770 2250,1570 2350,1400 2300,1100 2100,900 1900,500 1900,0z" fill="#f1f1f1" />

      <g filter="url(#water)">
        <g mask="url(#islands)">
          <g fill="#000">
            <path d="M1180,-80 1130,90 1100,170 1050,290 1020,340 985,420 960,480 950,540 930,600 900,650 885,690 835,720 820,770 790,830 765,880 715,940 700,990 680,1020 680,1060 660,1100 655,1150 645,1270 730,1270 720,1200 725,1150 735,1100 755,1050 780,1000 800,950 830,900 870,850 900,800 930,740 950,700 985,640 1010,570 1045,510 1060,430 1085,390 1120,330 1155,250 1185,195 1200,150 1220,80 1260,-80z" />
            <path d="M1290,755 1240,790 1190,870 1130,860 1095,865 1100,940 1040,1035 980,1080 945,1115 930,1200 930,1300 985,1300 990,1200 985,1130 1050,1040 1120,960 1130,900 1180,890 1270,815z" />
            <path d="M970,822h42v40h-14v-14h-28zM648,1035h45v10h-45z" />
          </g>
          <g transform="translate(0 1200)" fill="#000">
            <path d="M645,-50 640,50 612,60 612,120 605,165 605,200 570,225 540,260 505,300 485,290 470,270 425,262 430,290 415,330 412,360 365,320 385,350 410,395 350,385 445,440 445,470 420,472 280,408 310,430 425,485 412,510 360,495 300,465 225,448 305,480 320,530 340,555 300,590 240,595 180,575 150,605 100,625 -90,620 -90,655 100,640 180,620 330,605 370,605 400,640 405,760 430,800 470,850 512,900 512,945 450,1000 400,1060 380,1110 340,1150 300,1182 250,1300 1360,1300 1360,1060 1250,1062 1040,1052 960,1062 830,1062 790,1040 787,980 750,945 690,915 610,890 580,850 568,770 575,700 600,630 650,580 690,520 780,480 770,465 700,480 690,420 690,370 740,335 715,235 690,225 685,150 700,100 715,40 728,-50z" />
            <path d="M930,0 930,100 912,160 800,190 760,215 690,225 720,290 742,335 765,300 800,215 915,195 920,225 935,220 935,185 952,165 980,80 990,0z" />
            <path d="M155,-60 135,80 145,170 140,230 130,262 105,310 75,318 50,290 20,255 20,270 65,330 -90,360 -90,600 30,570 55,530 80,480 110,440 130,400 160,390 180,340 205,290 238,225 220,170 218,130 262,110 275,0 280,-60 262,-60 240,80 215,115 170,112 158,90 165,0z" />
            <path d="M268,745l20-20 4,20-18,18zM705,440h18l-4,35h-15z M942,545h16v18h-16z" />
          </g>
          <g transform="translate(1170 0)" fill="#000">
            <path d="M870,-90 870,40 830,80 800,120 750,165 715,180 690,220 662,262 640,260 690,300 655,320 620,300 600,300 600,270 572,260 575,290 600,310 612,370 598,370 605,420 600,520 625,570 650,610 690,635 735,690 715,705 650,660 600,650 520,665 510,690 480,700 465,620 450,620 430,670 425,705 370,700 355,670 320,680 310,720 240,735 200,705 150,705 110,740 60,785 90,810 150,815 190,860 200,900 210,922 225,915 225,870 280,850 350,895 385,920 385,960 358,975 362,1000 400,1015 450,985 420,970 415,865 360,835 400,775 450,760 485,755 495,812 525,790 530,760 570,730 620,745 700,765 715,800 760,795 780,765 830,780 860,880 900,960 920,970 925,870 960,860 925,840 925,740 890,720 870,660 875,620 910,610 915,500 925,470 1000,530 1080,570 1120,640 1130,700 1160,780 1150,700 1185,610 1190,510 1205,495 1150,485 1080,480 1060,510 1045,450 1005,400 1060,350 1050,275 1130,250 1287,315 1450,380 1450,-90z" />
            <path d="M565,145 578,145 572,250 552,245zM160,215 185,170 200,175 165,220zM198,60h8v50h-8zM450,1165h22l5,45 12,18-5,8-20-20z" />
          </g>
          <g transform="translate(1170 1200)" fill="#000">
            <path d="M-120,1070 95,1062 105,1035 160,1045 170,1090 250,1085 270,1050 255,960 245,895 165,905 205,850 200,825 180,820 175,775 240,740 250,705 300,680 350,640 390,625 375,580 410,580 400,610 420,625 490,625 510,600 580,605 640,640 720,680 775,725 760,760 800,740 840,770 860,735 900,705 970,685 970,705 930,740 870,765 840,800 900,820 830,830 838,940 820,945 820,860 760,930 680,935 620,995 550,1030 500,1055 400,1062 300,1140 250,1160 180,1165 160,1200 -120,1300z" />
            <path d="M280,1300 380,1165 450,1130 550,1090 650,1045 750,1015 870,1000 950,990 920,1030 915,1062 940,1040 980,1030 1100,1040 1290,1050 1450,1050 1450,1400 280,1400z" />
            <path d="M950,970 1040,972 1150,985 1360,985 1360,1005 1100,1000 1000,990 930,1000zM1215,800 1250,765 1287,775 1360,770 1360,800 1240,795 1230,850 1265,905 1360,905 1360,915 1255,915 1230,870 1195,880 1185,835 1215,830zM990,600l15-5 10,40-22-8zM750,370h8l2,15h10l-12,25z" />
            <path d="M270,570 310,670M200,595 265,670M75,725 160,775M1150,790 1180,790 1200,850M1030,910 1065,885M350,540 385,580M965,630 962,690M1250,690 1280,750M740,960 770,900M870,850l50,5M555,610 552,540 575,508 630,508" stroke="#000" strokeWidth="7" fill="none" />
          </g>
          <g fill="none" stroke="#000" strokeLinejoin="round">
            <path strokeWidth="13" d="M630,410 632,500 600,545 612,590 625,630 610,682 540,690 470,695M735,390 775,290 785,275 820,235M700,470 725,462 735,390" />
            <path strokeWidth="18" d="M480,697 435,735 380,775 325,870 312,910 322,990 290,1040 288,1085 320,1097 380,1085" />
            <path strokeWidth="12" d="M380,1085 390,1105 360,1150 290,1190 262,1270M30,1155 110,1140 162,1150 160,1220 152,1280M1195,350 1160,430 1140,490 1140,640 1165,720 1165,770 1105,860" />
            <path strokeWidth="7" d="M80,9 85,70 100,90 97,145M640,420 655,455 700,470M1165,195 1215,215 1260,220 1265,260 1200,340" />
          </g>
        </g>
      </g>

      {/* faint creeks */}
      <g fill="none" stroke="#c4c4c4" strokeWidth="5">
        <path d="M645,9 620,30 625,60 590,115 608,135 600,165 578,190 600,205 600,270 615,330 635,360 630,410M65,610 48,640 52,740 35,790" />
        <path stroke="#dcdcdc" d="M97,150 165,200 200,290 222,295 215,345 190,350M380,470 385,520 340,570 305,630 300,660 380,740M285,670 285,770 310,820M560,700 555,750M585,800v20M655,610 690,580 680,550M1400,630 1480,660 1500,700" />
        <path d="M1150,2130 1210,2145 1250,2225M1150,2170 1155,2220 1240,2230 1250,2160 1200,2140M1240,2040 1225,2100M1230,2070 1310,2110 1320,2030" />
        <path stroke="#d4d4d4" d="M1090,1165 1130,1205 1190,1260 1185,1300 1150,1350" />
      </g>

      {/* roads */}
      <g fill="none" stroke="#f9f9f9" strokeWidth="6" strokeLinejoin="round">
        <path d="M30,35 330,35 390,100 440,180 460,230 510,268 640,272 740,290 820,220 880,218 920,265 920,340 960,360 1020,370 1110,395 1180,425 1260,425M100,85 210,85 290,125 400,190 450,265 460,290 520,340 630,370 710,410 730,290M30,160 95,145 160,230 165,255 145,290 130,470 135,570 120,595 60,610 45,750M450,265 445,310 380,410 320,510 240,620M30,515 140,585 240,660 310,660 400,695 435,610 320,510M400,695 300,830 250,920 180,1030 130,1190M710,410 680,500 620,580 600,700 520,830 450,930 290,870M490,870 540,895 560,920 770,1012M560,920 550,870 520,830 440,750M30,1130 90,1110 150,1065 290,1045 460,950 490,870M130,1190 300,1190 430,1165 480,1190 510,1220 730,1250M30,120 120,108 160,90 210,20M400,60 405,9M1135,9 1080,100 1040,230 1000,320 940,325 940,225 830,155 650,60M650,520 640,700M500,660 600,595 700,500" />
        <path d="M1245,60 1180,190 1150,270 1140,370M1180,1020 1120,1130 1030,1140 1200,1190 1260,1200M1100,1260 1260,1190" strokeWidth="5" />
        <g transform="translate(0 1200)">
          <path d="M30,215 130,260 210,290 285,350 380,260 500,160 510,20 300,70 130,0 30,65M130,0 70,80 30,180M300,70 240,300 160,520 80,555 30,620M510,20 700,45M285,350 200,440 150,550M30,765 180,730 310,715 400,650M385,660 380,740 440,850 460,890 380,890 310,870 170,862 30,880M380,890 475,920 600,875M440,890 455,960 440,1010 370,1030 320,970 380,940 375,890M320,970 245,1090 175,1180M245,1090 310,1140 400,1030" />
          <path d="M705,235 740,320 790,420 810,470 690,630 600,650 570,720 575,820 610,890 690,915 750,930 800,970 840,1040 980,1055 1170,1035 1260,1050M660,640 700,690 695,740 640,840M810,470 900,560 930,640 940,770 970,900 970,1040M940,770 885,840 790,960M885,840 930,875 1050,855 1120,780 1180,690 1200,560 1215,450 1250,430M970,430 1000,560 1040,660 1120,780 1260,930M830,170 850,230 970,355 1120,395 1260,400M850,262 980,262 1025,160 1090,100 1045,0M1090,100 1200,10 1260,20M1105,140 1110,195 1260,340" />
        </g>
        <g transform="translate(1170 0)">
          <path d="M0,280 60,240 110,130 170,60 215,40 225,90 150,160 130,250 110,330M360,9 340,70 310,130 300,260 290,570M0,425 180,435 240,475 330,495 480,540 600,590 690,630 710,680 712,800M240,475 230,590 100,700 0,820M240,575 480,540 485,380 530,310 580,220 600,60 600,9M480,540 490,680 555,790 570,830 700,835 750,810 800,815 850,890 915,990M320,330 380,230 560,130 740,9M550,115 660,135 700,80M500,240 530,310 545,490 480,540M500,240 510,180 560,130M545,490 600,590M555,790 545,900 450,1000M0,885 50,940 200,970 300,935 360,990 400,1020 410,1110 440,1160M125,965 175,1120 120,1180 0,1210M0,1065 210,1050 400,1030 600,980 700,1030 820,1030 1000,980 1080,890 1180,820 1287,775M705,820 718,1160M718,830 760,870 780,980 830,1120 860,1210 920,1260M0,1135 170,1160 330,1215 480,1140 620,1160 720,1160 950,1085 1110,970 1180,940 1287,940M915,990 980,1060 1085,1170 1090,1260M920,1260 1060,1110 1110,1020 1200,1020 1287,965M920,1260 1150,1190 1287,1100M60,9 60,110 20,190" />
        </g>
        <g transform="translate(1170 1200)">
          <path d="M0,400 190,402 420,320 605,260M0,270 155,390 200,310 260,280 320,225 380,210 360,160 300,20M380,210 440,340 460,470 490,625 575,830 575,1010M380,210 500,155 520,110 690,125 830,60 920,60 1000,10M610,200 870,120 920,60 960,120 1060,155 1287,180M440,30 490,110 590,200 675,400 670,490M350,345 460,375 740,420 800,490 960,620 1000,680 1005,740 980,850 1020,910 1015,1000M285,405 400,435 460,470 650,475 870,465 1100,470 1280,530M460,470 320,580 250,690 165,775 155,900 105,960 0,830M105,960 100,1030M105,960 210,1070 250,1160M640,490 640,560 690,620 740,620M0,560 100,560M1090,60 1065,180 1075,350 1010,450M1075,320 1130,325 1210,380 1287,350M120,540 200,530 320,455 400,435M575,1010 860,960 1010,950M1290,10 1100,60 960,30M0,60 50,10 200,50 320,10" />
        </g>
      </g>

      <g fontFamily="Liberation Sans, Arial, sans-serif" fill="#606060">
        <g fontSize="43" fontStyle="italic" fill="#666">
          <text transform="translate(960 618) rotate(-69)" textLength="252">Hudson River</text>
          <text x="1838" y="556" textLength="230">Long Island</text>
          <text x="1890" y="606" textLength="125" fontSize="41">Sound</text>
        </g>
        <g fontSize="46" fontWeight="700">
          <text x="1363" y="372" textLength="247">The Bronx</text>
          <text x="826" y="898" textLength="255">Manhattan</text>
          <text x="1668" y="1301" textLength="180">Queens</text>
          <text x="946" y="1834" textLength="222" fontSize="48">Brooklyn</text>
          <text x="24" y="2246">n</text>
          <text x="20" y="2302">d</text>
        </g>
      </g>

      <Dots d={dotsNW} x={0} y={0} />
      <Dots d={dotsNE} x={1170} y={0} />
      <Dots d={dotsSW} x={0} y={1200} />
      <Dots d={dotsSE} x={1170} y={1200} />
      <Dots d={dotsC} x={570} y={810} />
    </svg>
  );
}

/* ---------- search dock ---------- */
const results: [string, string][] = [
  ['NYC.gov tiles orthophotography 1924', 'h-[74px]'], ['NYC.gov tiles orthophotography 1951', 'h-[74px]'], ['NYC.gov tiles orthophotography 1996', 'h-[74px]'],
  ['NYC.gov tiles orthophotography 2001-2', 'h-[74px]'], ['NYC.gov tiles labels', 'h-[71px]'], ['NYC.gov tiles basemap', 'h-[71px]'],
  ['NYC.gov tiles orthophotography 2004', 'h-[74px]'], ['NYC.gov tiles orthophotography 2006', 'h-[74px]'], ['NYC.gov tiles orthophotography 2008', 'h-[74px]'],
];
const MapIcon = () => (
  <svg width="30" height="30" viewBox="0 0 30 30" fill="none" stroke="#2f7fc4" strokeWidth="1.400" className="shrink-0 bg-white">
    <path d="M.7 2 10 4.500 20.500 1.500 29.300 3.500V28.500L20.500 26.500 10 29.300 .7 26z" strokeWidth="1.800" /><path d="M10 14v15M21.500 1.500v25" strokeWidth="2" />
    <path d="M3.500 3c1 16 7 22 11 12C17 8 23 3 29 9M7 4c0 10 3 14 5 10 2-5 3-9 8-10M1 16c3 4 6 7 10 6 6-2 6-12 13-9l5 4M1 21c6 5 12 4 15-2 3-5 8-4 13 2" opacity=".75" />
  </svg>
);
function SearchDock() {
  return (
    <div className="flex w-[582px] shrink-0 flex-col pr-px text-[12px]">
      <div className="flex h-[25px] items-center justify-between pl-[5px] pt-[3px] text-[14px] tracking-[-0.3px]"><span>Search QMS</span><DockButtons /></div>
      <div className="flex h-[28px] items-center justify-between rounded-[2px] border border-[#ababab] bg-white pl-[3px] pr-[10px] tracking-[0.05px]">
        <span>nyc.gov</span>
        <svg width="16" height="13" viewBox="0 0 16 13"><path d="M0 6.500 5 0h11v13H5z" fill="#8c8c8c" /><path d="M6.500 3.500l6 6M12.500 3.500l-6 6" stroke="#fff" strokeWidth="1.600" /></svg>
      </div>
      <div className="flex h-[42px] items-center justify-end gap-[8px] pb-px">
        <span className="flex h-[26px] w-[100px] items-center justify-center rounded-[3px] border border-[#ababab] bg-linear-to-b from-white to-[#eee] tracking-[-0.1px]">Filter by extent</span>
        <span className="flex h-[27px] w-[80px] items-center justify-between rounded-[3px] border border-[#ababab] bg-linear-to-b from-white to-[#eee] pl-[6px] pr-[8px]">All<Arrow /></span>
      </div>
      <div className="flex h-[647px] overflow-hidden border-l border-t border-[#b0b0b0] bg-white">
        <div className="flex-1 overflow-hidden pt-[1px]">
          {results.map(([t, h], i) => {
            const short = h === 'h-[71px]';
            return (
              <div key={t} className={`flex items-start pl-[6px] pr-[6px] ${h} ${i % 2 ? 'bg-[#e8e7e3]' : 'bg-white'}`}>
                <div className={short ? 'pt-[20px]' : 'pt-[22px]'}><MapIcon /></div>
                <div className={short ? 'ml-[8px] flex flex-1 flex-col gap-[6px] pt-[15px] leading-[16px]' : 'ml-[8px] flex flex-1 flex-col gap-[9px] pt-[16px] leading-[16px]'}>
                  <span className="text-[13px] font-bold tracking-[-0.17px]">{t}</span>
                  <span className="tracking-[-0.04px]">TMS <span className="text-[#0000f0] underline underline-offset-2">details</span>, <span className="text-[#0000f0] underline underline-offset-2">report a problem</span></span>
                </div>
                <span className={short ? 'mt-[31px] h-[13px] w-[13px] rounded-full bg-[#008000]' : 'mt-[32px] h-[13px] w-[13px] rounded-full bg-[#008000]'} />
                <span className={`ml-[10px] flex h-[25px] w-[40px] items-center justify-center rounded-[3px] border border-[#ababab] bg-linear-to-b from-white to-[#eee] text-[12.500px] ${short ? 'mt-[21px]' : 'mt-[23px]'}`}>Add</span>
              </div>
            );
          })}
        </div>
        <div className="flex w-[18px] flex-col border-x border-[#bbb] bg-linear-to-r from-[#f0f0f0] to-white">
          <div className="flex h-[16px] items-center justify-center border-b border-[#bbb] bg-white"><Tri d="u" /></div>
          <div className="h-[348px]" />
          <div className="h-[264px] border-y border-[#bbb] bg-[#e4e4e4]" />
          <div className="flex h-[18px] items-center justify-center bg-white"><Tri d="d" /></div>
        </div>
      </div>
      <div className="flex h-[47px] items-center justify-center gap-[8px] border-b-2 border-[#b5b5b5] pr-[2px] pt-[7px] tracking-[-0.05px]">
        <svg width="17" height="20" viewBox="0 0 17 20" className="ml-1" fill="#fbaa33"><path d="M8.500 0q1.500 0 1.500 2 4.500 1 4.500 7v5l2.500 3H0l2.500-3V9q0-6 4.500-7 0-2 1.500-2zM6.500 18h4q-2 3-4 0z" /></svg>
        <span><span className="text-[#0000f0] underline underline-offset-2">Download geodata</span> for your project</span>
      </div>
    </div>
  );
}

const Spin = ({ v, w }: { v: string; w: string }) => (
  <span className={`flex h-[25px] items-center rounded-[3px] border border-[#ababab] bg-white pl-[5px] ${w}`}>
    <span className="flex-1">{v}</span>
    <span className="flex h-full w-[18px] flex-col items-center justify-center gap-[2px] border-l border-[#bbb] bg-[#f4f4f4]"><Tri d="u" /><Tri d="d" /></span>
  </span>
);

export default function App() {
  return (
    <div className="flex h-[1030px] w-[1920px] flex-col overflow-hidden bg-[#efefef] font-['Open_Sans','Noto_Sans',sans-serif] text-black">
      <div className="relative flex h-[29px] shrink-0 items-center bg-white pl-[1px] text-[14.500px] tracking-[-0.2px]">
        <div className="absolute left-[809px] top-0 flex h-px w-[301px] bg-[#e2e2e2]"><span className="w-[60px] bg-[#0078d7]" /></div>
        <Qlogo /><span className="ml-[5px]">*tutorial_project — QGIS</span>
        <div className="ml-auto flex items-center gap-[45px] pr-[26px]">
          <span className="h-px w-[13px] bg-black" />
          <svg width="13" height="13" viewBox="0 0 13 13" fill="none" stroke="#000"><path d="M.5 3.500h9v9h-9zM2.500 3.500v-3h9v9h-2" /></svg>
          <svg width="13" height="13" viewBox="0 0 13 13" stroke="#000"><path d="M.5.500l12 12M12.500.500l-12 12" /></svg>
        </div>
      </div>
      <div className="flex h-[26px] shrink-0 items-center border-b-2 border-[#d9d9d9] pl-[13px] text-[14px] tracking-[-0.13px]">
        {menus.map(([t, u, w]) => (
          <span key={t} className={w}>{t.slice(0, u)}<span className={t === 'Project' ? '' : 'underline underline-offset-2'}>{t[u]}</span>{t.slice(u + 1)}</span>
        ))}
      </div>
      <Bar items={row1} h="h-[48px] border-b" />
      <Bar items={row2} h="h-[49px] border-b pt-[2px]" />
      <Bar items={row3} h="h-[48px] border-b-2 pt-[3px]" />
      <div className="flex h-[795px] shrink-0">
        <LeftDock />
        <div className="flex w-[9px] shrink-0 items-center justify-center"><span className="h-[21px] w-[2px] bg-[repeating-linear-gradient(180deg,#b0b0b0_0_1px,transparent_1px_3px)]" /></div>
        <div className="w-[809px] shrink-0 border-b border-[#b0b0b0] pt-[3px]"><MapView /></div>
        <div className="flex w-[9px] shrink-0 items-center justify-center"><span className="h-[21px] w-[2px] bg-[repeating-linear-gradient(180deg,#b0b0b0_0_1px,transparent_1px_3px)]" /></div>
        <SearchDock />
      </div>
      <div className="flex h-[35px] shrink-0 items-center pl-[5px] pt-[2px] text-[13px] tracking-[-0.2px]">
        <span className="flex h-[27px] w-[250px] items-center gap-[9px] rounded-[3px] border border-[#ababab] bg-white pl-[10px] text-[12.500px] tracking-normal text-[#777]">
          <svg width="16" height="16" viewBox="0 0 16 16" fill="none" stroke="#888" strokeWidth="1.500"><circle cx="6.500" cy="6.500" r="5.200" /><path d="M10.500 10.500l5 5" /></svg>Type to locate (Ctrl+K)
        </span>
        <span className="ml-[684px] w-[70px]">Coordinate</span>
        <span className="flex h-[27px] w-[118px] items-center justify-center rounded-[3px] border border-[#ababab] bg-white tracking-[0.1px]">984233, 189104</span>
        <svg width="20" height="20" viewBox="0 0 20 20" className="ml-[6px]" fill="none" stroke="#222"><path d="M2 3l5-2 6 9-5 5-6-6z" fill="#222" /><path d="M4 4l5 8M7.500 2.500l4 7" stroke="#fff" strokeWidth="1.600" /><circle cx="12" cy="14" r="4.500" fill="#fff" strokeWidth="2" /><circle cx="12" cy="14" r="1.500" fill="#222" /><path d="M14 6l4-4" strokeDasharray="2 1" /></svg>
        <span className="ml-[16px] w-[36px] text-[12.500px]">Scale</span>
        <span className="flex h-[27px] w-[95px] items-center rounded-[3px] border border-[#ababab] bg-white pl-[4px] tracking-[0px]"><span className="flex-1">1:225847</span><span className="flex h-full w-[24px] items-center justify-center border-l border-[#bbb] bg-[#f4f4f4]"><Arrow /></span></span>
        <svg width="16" height="20" viewBox="0 0 16 20" className="ml-[16px]" fill="none"><path d="M3.500 9V6q0-4.500 4.500-4.500T12.500 6v3" stroke="#888" strokeWidth="2.200" /><rect x=".5" y="8.500" width="15" height="10.500" rx="2" fill="#636363" /></svg>
        <span className="ml-[11px] w-[60px]">Magnifier</span>
        <Spin v="100%" w="w-[100px]" />
        <span className="ml-[12px] w-[63px]">Rotation</span>
        <Spin v="0.0 °" w="w-[101px]" />
        <span className="w-[7px]" /><Check /><span className="ml-[7px] w-[61px]">Render</span>
        <svg width="19" height="18" viewBox="0 0 19 18" fill="none" stroke="#666" strokeWidth="1.400"><path d="M5 1h9l4.500 6-2 6-7 4.500L2.500 13l-2-6zM.5 7h18M2.500 12h14M5 1 4.500 12 9.500 17.500 14 12V1M9.500 1v16M3 4h13M1.500 9.500h16" /></svg>
        <span className="ml-[3px] w-[97px]">EPSG:2263</span>
        <svg width="21" height="19" viewBox="0 0 21 19"><path d="M10.500 0C17 0 21 3.500 21 7.500S18 13 15 14.500L16 19l-5-4C4 15.500 0 12 0 7.500S4 0 10.500 0z" fill="#555" /><g fill="#fff"><circle cx="6" cy="7.500" r="1.400" /><circle cx="10.500" cy="7.500" r="1.400" /><circle cx="15" cy="7.500" r="1.400" /></g></svg>
      </div>
    </div>
  );
}
